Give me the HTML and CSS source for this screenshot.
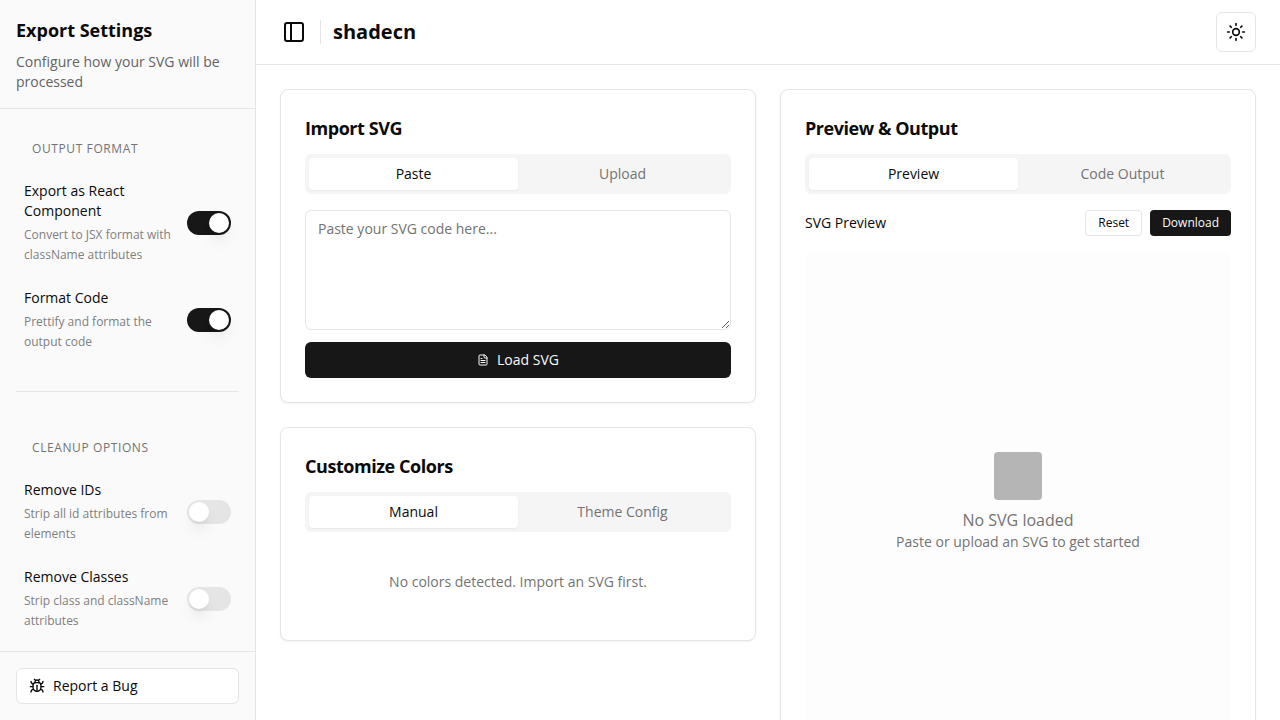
FILE: index.html
```html
<!DOCTYPE html>
<html lang="en">
<head>
    <meta charset="UTF-8">
    <meta name="viewport" content="width=device-width, initial-scale=1.0">
    <title>shadecn</title>
    <link rel="stylesheet" href="styles.css">
</head>
<body>
    <div class="app">
        <aside class="sidebar">
            <div class="sidebar-header">
                <h2>Export Settings</h2>
                <p>Configure how your SVG will be processed</p>
            </div>
            <div class="sidebar-content">
                <section class="group">
                    <h3>Output Format</h3>
                    <div class="options">
                        <div class="option">
                            <div class="option-text">
                                <label for="react">Export as React Component</label>
                                <p>Convert to JSX format with className attributes</p>
                            </div>
                            <input type="checkbox" role="switch" class="switch" id="react" checked>
                        </div>
                        <div class="option">
                            <div class="option-text">
                                <label for="format">Format Code</label>
                                <p>Prettify and format the output code</p>
                            </div>
                            <input type="checkbox" role="switch" class="switch" id="format" checked>
                        </div>
                    </div>
                </section>
                <hr>
                <section class="group">
                    <h3>Cleanup Options</h3>
                    <div class="options">
                        <div class="option">
                            <div class="option-text">
                                <label for="remove-ids">Remove IDs</label>
                                <p>Strip all id attributes from elements</p>
                            </div>
                            <input type="checkbox" role="switch" class="switch" id="remove-ids">
                        </div>
                        <div class="option">
                            <div class="option-text">
                                <label for="remove-classes">Remove Classes</label>
                                <p>Strip class and className attributes</p>
                            </div>
                            <input type="checkbox" role="switch" class="switch" id="remove-classes">
                        </div>
                    </div>
                </section>
            </div>
            <div class="sidebar-footer">
                <button type="button" class="btn btn-outline btn-report">
                    <svg class="icon" width="16" height="16" viewBox="0 0 24 24">
                        <path d="m8 2 1.88 1.88"/>
                        <path d="M14.12 3.88 16 2"/>
                        <path d="M9 7.13v-1a3.003 3.003 0 1 1 6 0v1"/>
                        <path d="M12 20c-3.3 0-6-2.7-6-6v-3a4 4 0 0 1 4-4h4a4 4 0 0 1 4 4v3c0 3.3-2.7 6-6 6"/>
                        <path d="M12 20v-9"/>
                        <path d="M6.53 9C4.6 8.8 3 7.1 3 5"/>
                        <path d="M6 13H2"/>
                        <path d="M3 21c0-2.1 1.7-3.9 3.8-4"/>
                        <path d="M20.97 5c0 2.1-1.6 3.8-3.5 4"/>
                        <path d="M22 13h-4"/>
                        <path d="M17.2 17c2.1.1 3.8 1.9 3.8 4"/>
                    </svg>
                    Report a Bug
                </button>
            </div>
        </aside>

        <div class="page">
            <header class="topbar">
                <button type="button" class="trigger" aria-label="Toggle Sidebar">
                    <svg class="icon" width="24" height="24" viewBox="0 0 24 24">
                        <rect x="3" y="3" width="18" height="18" rx="2"/>
                        <path d="M9 3v18"/>
                    </svg>
                </button>
                <div class="divider"></div>
                <h1>shadecn</h1>
                <button type="button" class="btn btn-outline theme-toggle" aria-label="Toggle theme">
                    <svg class="icon" width="20" height="20" viewBox="0 0 24 24">
                        <circle cx="12" cy="12" r="4"/>
                        <path d="M12 2v2"/>
                        <path d="M12 20v2"/>
                        <path d="m4.93 4.93 1.41 1.41"/>
                        <path d="m17.66 17.66 1.41 1.41"/>
                        <path d="M2 12h2"/>
                        <path d="M20 12h2"/>
                        <path d="m6.34 17.66-1.41 1.41"/>
                        <path d="m19.07 4.93-1.41 1.41"/>
                    </svg>
                </button>
            </header>

            <main class="content">
                <div class="column">
                    <section class="card">
                        <h2>Import SVG</h2>
                        <div class="tabs" role="tablist">
                            <button type="button" role="tab" class="tab active" aria-selected="true">Paste</button>
                            <button type="button" role="tab" class="tab" aria-selected="false">Upload</button>
                        </div>
                        <textarea class="code-input" placeholder="Paste your SVG code here..." aria-label="SVG code"></textarea>
                        <button type="button" class="btn btn-primary btn-load">
                            <svg class="icon" width="12" height="12" viewBox="0 0 24 24">
                                <path d="M15 2H6a2 2 0 0 0-2 2v16a2 2 0 0 0 2 2h12a2 2 0 0 0 2-2V7Z"/>
                                <path d="M14 2v4a2 2 0 0 0 2 2h4"/>
                                <path d="M10 9H8"/>
                                <path d="M16 13H8"/>
                                <path d="M16 17H8"/>
                            </svg>
                            Load SVG
                        </button>
                    </section>

                    <section class="card">
                        <h2>Customize Colors</h2>
                        <div class="tabs" role="tablist">
                            <button type="button" role="tab" class="tab active" aria-selected="true">Manual</button>
                            <button type="button" role="tab" class="tab" aria-selected="false">Theme Config</button>
                        </div>
                        <p class="empty">No colors detected. Import an SVG first.</p>
                    </section>
                </div>

                <section class="card">
                    <h2>Preview &amp; Output</h2>
                    <div class="tabs" role="tablist">
                        <button type="button" role="tab" class="tab active" aria-selected="true">Preview</button>
                        <button type="button" role="tab" class="tab" aria-selected="false">Code Output</button>
                    </div>
                    <div class="preview-bar">
                        <h3>SVG Preview</h3>
                        <button type="button" class="btn btn-outline btn-sm">Reset</button>
                        <button type="button" class="btn btn-primary btn-sm">Download</button>
                    </div>
                    <div class="preview">
                        <div class="preview-icon"></div>
                        <p class="preview-title">No SVG loaded</p>
                        <p>Paste or upload an SVG to get started</p>
                    </div>
                </section>
            </main>
        </div>
    </div>
</body>
</html>
```
FILE: styles.css
```css
* {
    box-sizing: border-box;
    margin: 0;
}

body {
    font-family: "Open Sans", "Noto Sans", sans-serif;
    font-size: 14px;
    line-height: 20px;
    color: #0a0a0a;
    background-color: #fff;
}

button,
textarea {
    font: inherit;
    color: inherit;
}

button {
    cursor: pointer;
}

h3 {
    font-size: 14px;
    font-weight: 400;
}

.icon {
    display: block;
    flex-shrink: 0;
    fill: none;
    stroke: currentColor;
    stroke-width: 2;
    stroke-linecap: round;
    stroke-linejoin: round;
}

.app {
    display: flex;
    height: 100vh;
}

/* Sidebar */
.sidebar {
    display: flex;
    flex-direction: column;
    flex: 0 0 256px;
    background-color: #fafafa;
    border-right: 1px solid #e5e5e5;
}

.sidebar-header {
    padding: 16px;
    border-bottom: 1px solid #e5e5e5;
}

.sidebar-header h2 {
    margin-bottom: 8px;
    font-size: 18px;
    line-height: 28px;
    font-weight: 700;
}

.sidebar-header p {
    color: #636363;
}

.sidebar-content {
    flex: 1;
    min-height: 0;
    padding: 16px;
    overflow-y: auto;
    scrollbar-width: none;
}

.sidebar-content hr {
    margin: 31px 0 32px;
    border: 0;
    border-top: 1px solid #e5e5e5;
}

.group {
    padding: 8px;
}

.group h3 {
    padding: 0 8px;
    margin-bottom: 16px;
    font-size: 12px;
    line-height: 32px;
    letter-spacing: 0.05em;
    text-transform: uppercase;
    color: #737373;
}

.options {
    display: flex;
    flex-direction: column;
    gap: 23px;
}

.option {
    display: flex;
    align-items: center;
    gap: 16px;
}

.option-text {
    flex: 1;
}

.option-text label {
    display: block;
    margin-bottom: 4px;
}

.option-text p {
    font-size: 12px;
    color: #808080;
}

.switch {
    appearance: none;
    flex-shrink: 0;
    width: 44px;
    height: 24px;
    margin: 0;
    padding: 2px;
    border-radius: 12px;
    background-color: #e5e5e5;
    cursor: pointer;
}

.switch::before {
    content: "";
    display: block;
    width: 20px;
    height: 20px;
    border-radius: 50%;
    background-color: #fff;
    box-shadow: 0 10px 15px -3px rgba(0, 0, 0, 0.1), 0 4px 6px -4px rgba(0, 0, 0, 0.1);
}

.switch:checked {
    background-color: #171717;
}

.switch:checked::before {
    margin-left: auto;
}

.sidebar-footer {
    padding: 16px;
    border-top: 1px solid #e5e5e5;
}

/* Buttons */
.btn {
    display: flex;
    align-items: center;
    justify-content: center;
    gap: 8px;
    border: 0;
    border-radius: 6px;
}

.btn-outline {
    background-color: #fff;
    border: 1px solid #e5e5e5;
}

.btn-primary {
    background-color: #171717;
    color: #fafafa;
}

.btn-sm {
    height: 26px;
    padding: 0 12px;
    font-size: 12px;
    border-radius: 4px;
}

.btn-report {
    justify-content: flex-start;
    width: 100%;
    height: 36px;
    padding: 0 12px;
}

.btn-load {
    width: 100%;
    height: 36px;
}

/* Top bar */
.page {
    display: flex;
    flex-direction: column;
    flex: 1;
    min-width: 0;
}

.topbar {
    display: flex;
    align-items: center;
    gap: 12px;
    padding: 12px 24px;
    border-bottom: 1px solid #e5e5e5;
}

.topbar h1 {
    font-size: 20px;
    line-height: 28px;
    font-weight: 700;
}

.trigger {
    padding: 2px;
    border: 0;
    background: none;
}

.divider {
    width: 1px;
    height: 24px;
    background-color: #e5e5e5;
}

.theme-toggle {
    width: 40px;
    height: 40px;
    margin-left: auto;
    padding: 0;
}

/* Content */
.content {
    display: grid;
    grid-template-columns: 1fr 1fr;
    align-items: start;
    gap: 24px;
    flex: 1;
    min-height: 0;
    padding: 24px;
    overflow-y: auto;
    scrollbar-width: none;
}

.column {
    display: flex;
    flex-direction: column;
    gap: 24px;
}

.card {
    padding: 24px;
    border: 1px solid #e5e5e5;
    border-radius: 8px;
    background-color: #fff;
    box-shadow: 0 1px 2px rgba(0, 0, 0, 0.05);
}

.card h2 {
    margin-bottom: 12px;
    font-size: 18px;
    line-height: 28px;
    font-weight: 700;
    letter-spacing: -0.025em;
}

.tabs {
    display: grid;
    grid-template-columns: 1fr 1fr;
    height: 40px;
    margin-bottom: 16px;
    padding: 4px;
    border-radius: 6px;
    background-color: #f5f5f5;
}

.tab {
    border: 0;
    border-radius: 4px;
    background: none;
    color: #737373;
}

.tab.active {
    background-color: #fff;
    color: #0a0a0a;
    box-shadow: 0 1px 2px rgba(0, 0, 0, 0.05);
}

.code-input {
    display: block;
    width: 100%;
    height: 120px;
    margin-bottom: 12px;
    padding: 8px 12px;
    border: 1px solid #e5e5e5;
    border-radius: 6px;
    background-color: #fff;
    resize: vertical;
}

.code-input::placeholder {
    color: #737373;
}

.empty {
    padding: 24px 0;
    text-align: center;
    color: #737373;
}

.preview-bar {
    display: flex;
    align-items: center;
    gap: 8px;
    margin-bottom: 16px;
}

.preview-bar h3 {
    margin-right: auto;
}

.preview {
    display: flex;
    flex-direction: column;
    align-items: center;
    justify-content: center;
    height: 500px;
    border-radius: 8px;
    background-color: #fdfdfd;
    color: #737373;
    text-align: center;
}

.preview-icon {
    width: 48px;
    height: 48px;
    margin-bottom: 8px;
    border-radius: 4px;
    background-color: #b5b5b5;
}

.preview-title {
    font-size: 16px;
    line-height: 24px;
}
```
